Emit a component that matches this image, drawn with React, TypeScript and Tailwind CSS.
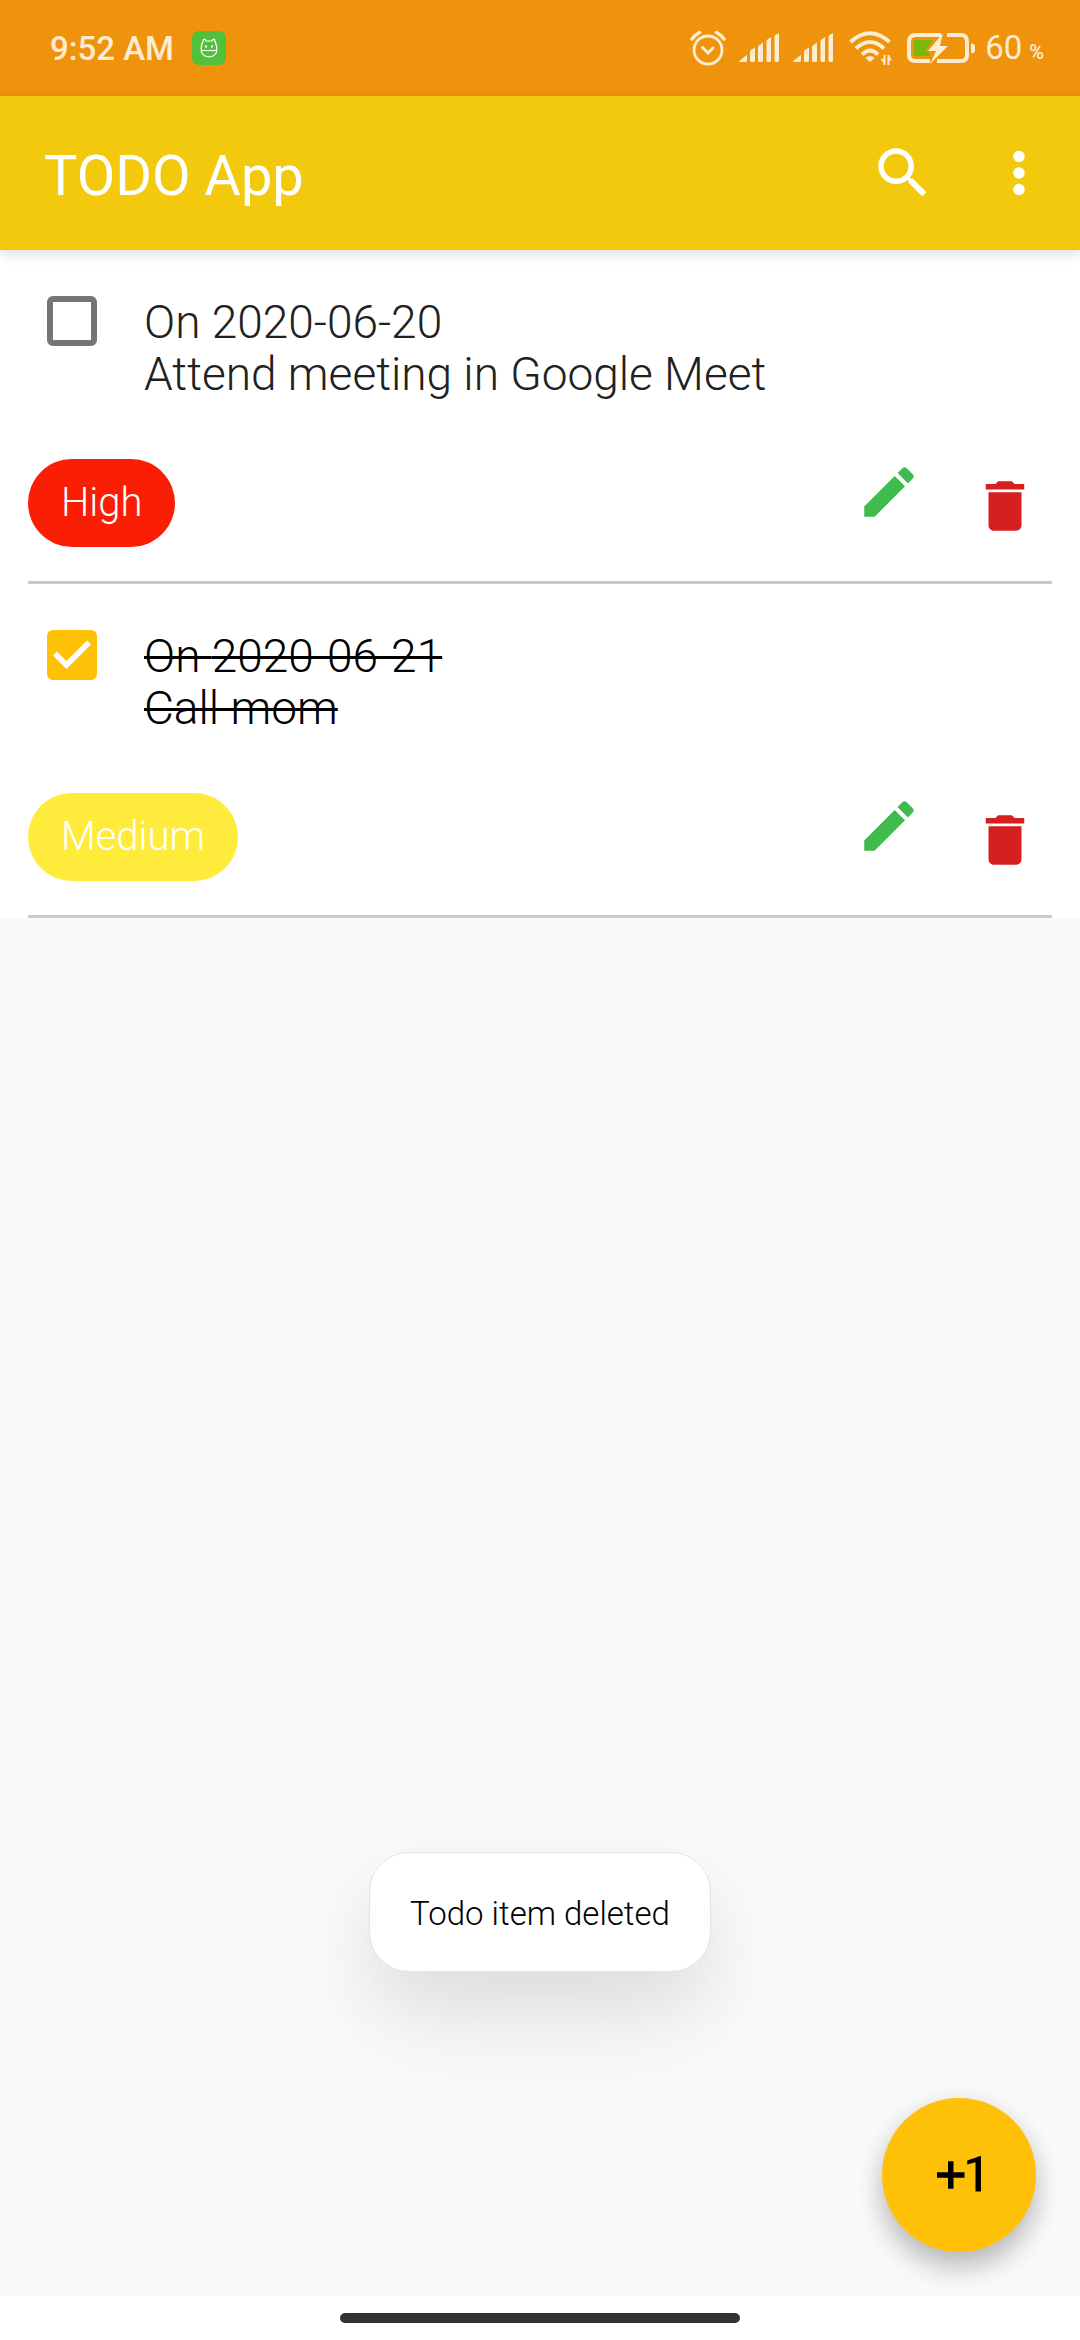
import { useState } from "react";
import type { ReactNode } from "react";

type Todo = { id: number; date: string; title: string; priority: "High" | "Medium"; done: boolean };

const initialTodos: Todo[] = [
  { id: 1, date: "2020-06-20", title: "Attend meeting in Google Meet", priority: "High", done: false },
  { id: 2, date: "2020-06-21", title: "Call mom", priority: "Medium", done: true },
];

const chipColors = { High: "bg-[#fa1e05]", Medium: "bg-[#ffeb3b]" };

function Icon({ children }: { children: ReactNode }) {
  return (
    <svg viewBox="0 0 24 24" className="size-[66px]" fill="currentColor" aria-hidden="true">
      {children}
    </svg>
  );
}

function SignalIcon() {
  return (
    <svg viewBox="0 0 41 30" className="h-[30px] w-[41px]" fill="currentColor" aria-hidden="true">
      <path d="M0 28L8 22V27.500Q8 29 6.500 29H1Q0 29 0 28Z" />
      <path d="M11 18.500Q11 17.500 12 17L16 14.500V27.500Q16 29 14.500 29H12.500Q11 29 11 27.500Z" />
      <path d="M19 14Q19 13 20 12.500L24 9.500V27.500Q24 29 22.500 29H20.500Q19 29 19 27.500Z" />
      <path d="M27.500 8Q27.500 7 28.500 6.500L32 4V27.500Q32 29 30.500 29H29Q27.500 29 27.500 27.500Z" />
      <path d="M35.500 3.500Q35.500 2.500 36.500 2L40 0V27.500Q40 29 38.500 29H37Q35.500 29 35.500 27.500Z" />
    </svg>
  );
}

function StatusBar() {
  return (
    <div className="flex h-24 items-center justify-between bg-[#f0930c] pr-9 pl-[50px] text-[#feecd0]">
      <div className="flex items-center gap-[18px]">
        <span className="pt-0.5 text-[33px] leading-10 font-medium">9:52 AM</span>
        <svg viewBox="0 0 34 34" className="size-[34px]" aria-hidden="true">
          <rect width="34" height="34" rx="7" fill="#52c03a" />
          <g fill="none" stroke="#fff" strokeWidth="1.200">
            <path d="M9.500 15L11.500 8.500Q13 7.500 14 10H20Q21 7.500 22.500 8.500L24.500 15Q26 22 21.500 24.800Q17 27 12.500 24.800Q8 22 9.500 15Z" />
            <path d="M9 19.500H25" />
          </g>
          <path d="M13 14.500h2v2h-2zM19 14.500h2v2h-2z" fill="#fff" />
        </svg>
      </div>
      <div className="flex items-center">
        <svg viewBox="0 0 36 36" className="mr-[13px] size-9" fill="none" stroke="currentColor" strokeWidth="2.800" strokeLinecap="round" aria-hidden="true">
          <circle cx="18" cy="20" r="14" />
          <path d="M12.500 17.500L18 23L23 18" strokeWidth="3" />
          <path d="M2 9Q5 4.500 9.500 2.500M26.500 2.500Q31 4.500 34 9" strokeWidth="3.500" />
        </svg>
        <span className="mr-[13px]"><SignalIcon /></span>
        <span className="mr-[15px]"><SignalIcon /></span>
        <svg viewBox="0 0 43 34" className="mr-[15px] h-[34px] w-[43px]" fill="none" stroke="currentColor" strokeWidth="4" aria-hidden="true">
          <path d="M1.500 11Q21 -6.500 40.500 11" />
          <path d="M7 17.500Q21 4.500 35 17.500" />
          <path d="M13 23.500Q21 15.500 29 23.500" />
          <path d="M16.500 27Q21 23 25.500 27L21 31Z" fill="currentColor" stroke="none" />
          <path d="M35.500 24V34M39.500 24V34" strokeWidth="2" />
          <path d="M35.500 33V28H31.500ZM39.500 24V29.500H43Z" fill="currentColor" stroke="none" />
        </svg>
        <svg viewBox="0 0 69 31" className="mr-[9px] h-[31px] w-[69px]" aria-hidden="true">
          <path d="M7 7H26L17 19H23L22 23H7Z" fill="#76b90f" />
          <path d="M34 2H9Q2 2 2 9V22Q2 28 9 28H23M40 2H54Q60 2 60 9V22Q60 28 54 28H30" fill="none" stroke="currentColor" strokeWidth="4" />
          <path d="M36 0L21 18H29L23 31L41 13H33Z" fill="currentColor" />
          <path d="M64 10.500Q68 10.500 68 13.500V17.500Q68 20.500 64 20.500Z" fill="currentColor" />
        </svg>
        <span className="flex items-baseline gap-[7px] pt-1 leading-10">
          <span className="text-[33px]">60</span>
          <span className="text-[20px] font-medium">%</span>
        </span>
      </div>
    </div>
  );
}

function TodoItem({ todo, onToggle, onDelete }: { todo: Todo; onToggle: () => void; onDelete: () => void }) {
  const id = `todo-${todo.id}`;
  return (
    <li className="bg-white px-7">
      <div className="border-b-[3px] border-[#cacaca] pt-[46px] pb-[34px]">
        <div className="flex items-start gap-[47px] pl-[19px]">
          <span className="grid size-[50px] shrink-0">
            <input
              id={id}
              type="checkbox"
              checked={todo.done}
              onChange={onToggle}
              className="col-start-1 row-start-1 size-[50px] appearance-none rounded-[6px] border-[6px] border-[#757575] checked:border-[#ffc107] checked:bg-[#ffc107]"
            />
            <svg viewBox="0 0 50 50" className="pointer-events-none col-start-1 row-start-1 size-[50px]" fill="none" stroke="#fff" strokeWidth="5.500" aria-hidden="true">
              {todo.done && <path d="M8 23.500L19.500 35L42 12.500" />}
            </svg>
          </span>
          <label
            htmlFor={id}
            className={`text-[46px] leading-[52px] font-light ${todo.done ? "text-black line-through decoration-[3px]" : "text-[#212121]"}`}
          >
            On {todo.date}
            <br />
            {todo.title}
          </label>
        </div>
        <div className="mt-[59px] flex items-start justify-between">
          <span className={`rounded-full px-[33px] py-[18px] text-[40px] leading-[52px] font-light text-white ${chipColors[todo.priority]}`}>
            {todo.priority}
          </span>
          <div className="flex items-start gap-[50px] pr-[14px]">
            <button type="button" aria-label={`Edit ${todo.title}`} className="text-[#40b94d]">
              <Icon>
                <path d="M3 17.250V21h3.750L17.810 9.940l-3.750-3.750L3 17.250zM20.710 7.040c.390-.390.390-1.020 0-1.410l-2.340-2.340c-.390-.390-1.020-.390-1.410 0l-1.830 1.830 3.750 3.750 1.830-1.830z" />
              </Icon>
            </button>
            <button type="button" aria-label={`Delete ${todo.title}`} onClick={onDelete} className="pt-[14px] text-[#d62020]">
              <Icon>
                <path d="M6 19c0 1.100.900 2 2 2h8c1.100 0 2-.900 2-2V7H6v12zM19 4h-3.500l-1-1h-5l-1 1H5v2h14V4z" />
              </Icon>
            </button>
          </div>
        </div>
      </div>
    </li>
  );
}

export default function App() {
  const [todos, setTodos] = useState(initialTodos);
  const toggle = (id: number) => setTodos(todos.map((t) => (t.id === id ? { ...t, done: !t.done } : t)));
  const remove = (id: number) => setTodos(todos.filter((t) => t.id !== id));

  return (
    <div className="flex min-h-screen flex-col bg-[#fafafa] font-['Roboto',sans-serif]">
      <StatusBar />
      <header className="relative z-10 flex h-[154px] items-center justify-between bg-[#f2c90c] pr-7 pl-11 text-white shadow-[0_4px_12px_rgba(0,0,0,0.14)]">
        <h1 className="pt-1.5 text-[56px] leading-[64px]">TODO App</h1>
        <div className="flex gap-[50px]">
          <button type="button" aria-label="Search">
            <Icon>
              <path d="M15.500 14h-.790l-.280-.270C15.410 12.590 16 11.110 16 9.500 16 5.910 13.090 3 9.500 3S3 5.910 3 9.500 5.910 16 9.500 16c1.610 0 3.090-.590 4.230-1.570l.270.280v.790l5 4.990L20.490 19l-4.990-5zm-6 0C7.010 14 5 11.990 5 9.500S7.010 5 9.500 5 14 7.010 14 9.500 11.990 14 9.500 14z" />
            </Icon>
          </button>
          <button type="button" aria-label="More options">
            <Icon>
              <circle cx="12" cy="6" r="2.100" />
              <circle cx="12" cy="12" r="2.100" />
              <circle cx="12" cy="18" r="2.100" />
            </Icon>
          </button>
        </div>
      </header>
      <main className="relative flex-1 overflow-hidden">
        <ul>
          {todos.map((todo) => (
            <TodoItem key={todo.id} todo={todo} onToggle={() => toggle(todo.id)} onDelete={() => remove(todo.id)} />
          ))}
        </ul>
        <div className="pointer-events-none absolute inset-x-0 bottom-[324px] flex justify-center">
          <div
            role="status"
            className="rounded-[40px] border border-[#e4e4e4] bg-white px-10 pt-10 pb-9 text-[33px] leading-[42px] font-light text-black shadow-[0_50px_110px_rgba(0,0,0,0.08),0_32px_60px_rgba(0,0,0,0.05)]"
          >
            Todo item deleted
          </div>
        </div>
        <button
          type="button"
          aria-label="Add todo"
          className="absolute right-11 bottom-11 flex size-[154px] items-center justify-center rounded-full bg-[#ffc107] text-black shadow-[0_16px_28px_rgba(0,0,0,0.24),0_2px_28px_rgba(0,0,0,0.06)]"
        >
          <Icon>
            <path d="M10 7H8v4H4v2h4v4h2v-4h4v-2h-4zM15 6.700V8.200l3-.8V18h2V5z" />
          </Icon>
        </button>
      </main>
      <footer className="flex h-11 items-center justify-center bg-white">
        <div className="h-[10px] w-[37%] rounded-full bg-[#333333]" />
      </footer>
    </div>
  );
}
